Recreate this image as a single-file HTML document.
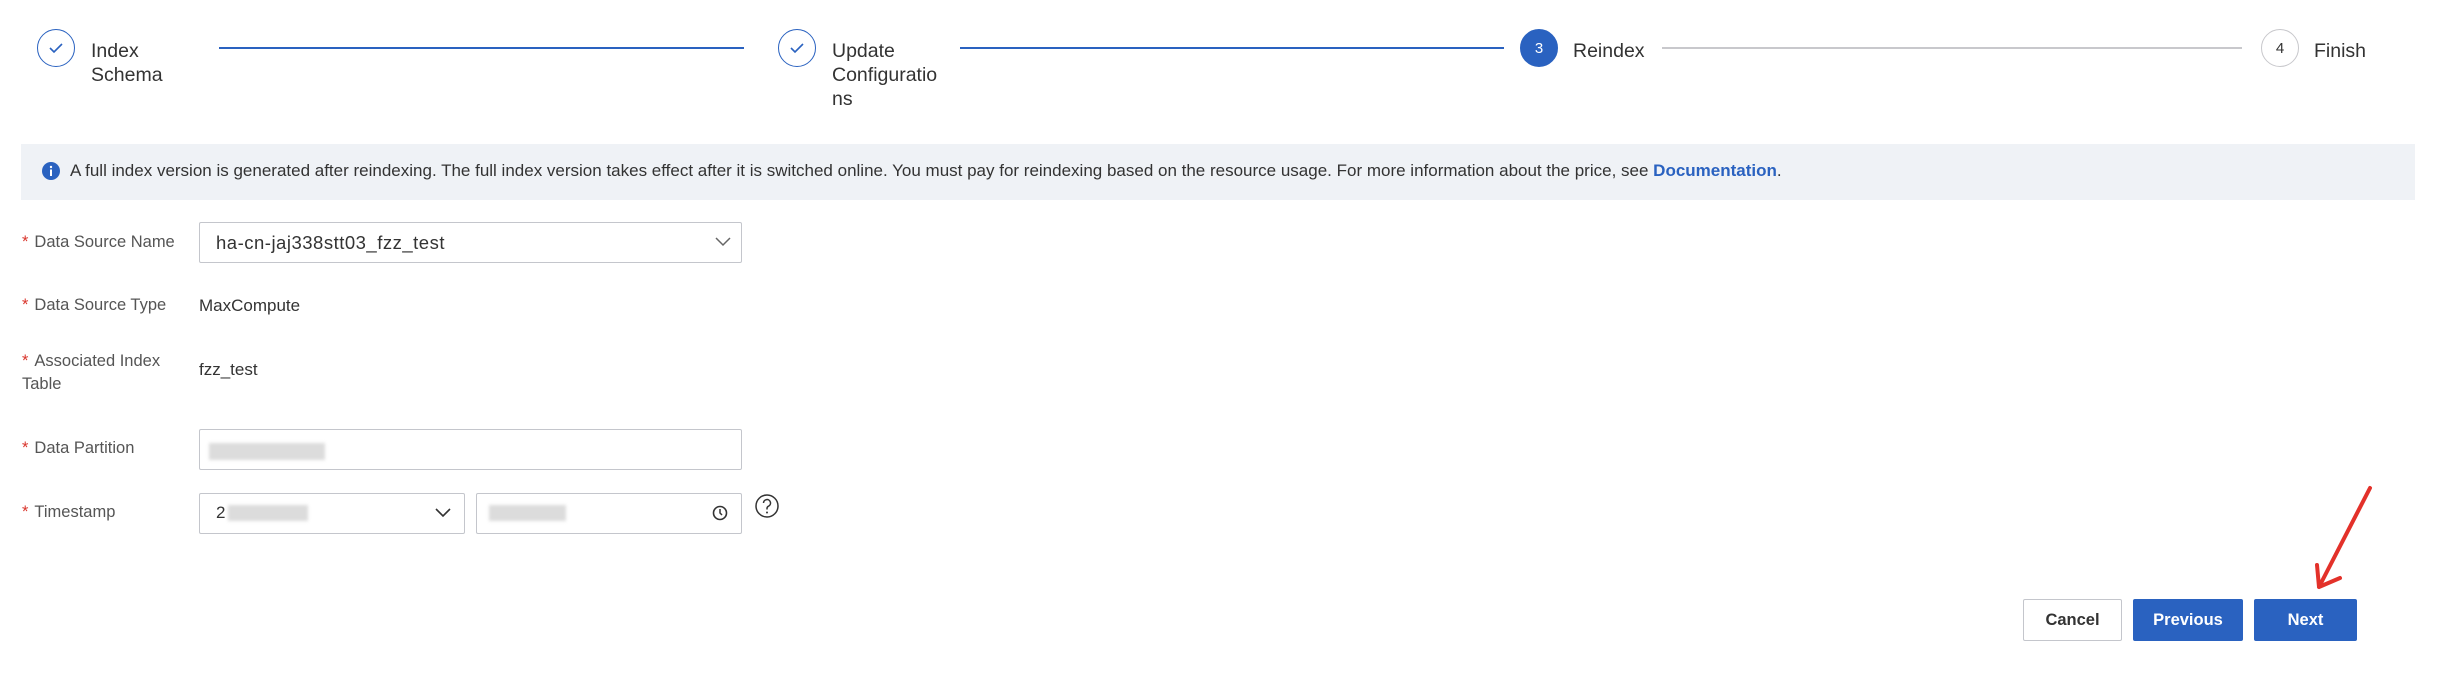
<!DOCTYPE html>
<html><head><meta charset="utf-8"><style>
*{box-sizing:border-box;margin:0;padding:0}
body{width:2440px;height:694px;background:#fff;font-family:"Liberation Sans",sans-serif;color:#333;position:relative;overflow:hidden}
.a{position:absolute}
.circ{position:absolute;width:38px;height:38px;border-radius:50%;border:1.5px solid #2a62c0;display:flex;align-items:center;justify-content:center;font-size:15px}
.st{position:absolute;font-size:19.5px;line-height:24px;color:#333}
.ln{position:absolute;height:1.5px;top:47px}
.lab{position:absolute;left:22px;font-size:16.5px;color:#555;line-height:23px}
.lab b{color:#d9342b;font-weight:normal;margin-right:6px}
.box{position:absolute;border:1px solid #c4c6cc;border-radius:2px;background:#fff}
.val{position:absolute;font-size:17px;color:#333}
.blur{position:absolute;background:#dcdcdc;filter:blur(1.5px)}
.btn{position:absolute;top:599px;height:42px;border-radius:2px;font-size:16.5px;font-weight:bold;display:flex;align-items:center;justify-content:center}
</style></head><body>
<div class="circ" style="left:37px;top:29px"><svg width="16" height="12" viewBox="0 0 16 12"><path d="M2 6l4 4 8-8" fill="none" stroke="#2a62c0" stroke-width="1.6"/></svg></div>
<div class="st" style="left:91px;top:39px">Index<br>Schema</div>
<div class="ln" style="left:219px;width:525px;background:#2a62c0"></div>
<div class="circ" style="left:778px;top:29px"><svg width="16" height="12" viewBox="0 0 16 12"><path d="M2 6l4 4 8-8" fill="none" stroke="#2a62c0" stroke-width="1.6"/></svg></div>
<div class="st" style="left:832px;top:39px">Update<br>Configuratio<br>ns</div>
<div class="ln" style="left:960px;width:544px;background:#2a62c0"></div>
<div class="circ" style="left:1520px;top:29px;background:#2a62c0;color:#fff">3</div>
<div class="st" style="left:1573px;top:39px">Reindex</div>
<div class="ln" style="left:1662px;width:580px;background:#c8c8cc"></div>
<div class="circ" style="left:2261px;top:29px;border-color:#c8c8cc;color:#333">4</div>
<div class="st" style="left:2314px;top:39px">Finish</div>

<div class="a" style="left:21px;top:144px;width:2394px;height:56px;background:#eff2f6"></div>
<svg class="a" style="left:42px;top:162px" width="18" height="18" viewBox="0 0 18 18"><circle cx="9" cy="9" r="9" fill="#2a62c0"/><rect x="8" y="7.5" width="2" height="6.5" fill="#fff"/><circle cx="9" cy="5" r="1.2" fill="#fff"/></svg>
<div class="a" style="left:70px;top:161px;font-size:17px;line-height:20px;color:#333;white-space:nowrap">A full index version is generated after reindexing. The full index version takes effect after it is switched online. You must pay for reindexing based on the resource usage. For more information about the price, see <span style="color:#2a62c0;font-weight:bold">Documentation</span>.</div>

<div class="lab" style="top:231px"><b>*</b>Data Source Name</div>
<div class="box" style="left:199px;top:222px;width:543px;height:41px"></div>
<div class="val" style="left:216px;top:232px;font-size:18.5px;letter-spacing:0.5px">ha-cn-jaj338stt03_fzz_test</div>
<svg class="a" style="left:714px;top:236px" width="18" height="12" viewBox="0 0 18 12"><path d="M2 2l7 7 7-7" fill="none" stroke="#666" stroke-width="1.5"/></svg>

<div class="lab" style="top:294px"><b>*</b>Data Source Type</div>
<div class="val" style="left:199px;top:296px">MaxCompute</div>

<div class="lab" style="top:350px"><b>*</b>Associated Index<br>Table</div>
<div class="val" style="left:199px;top:360px">fzz_test</div>

<div class="lab" style="top:437px"><b>*</b>Data Partition</div>
<div class="box" style="left:199px;top:429px;width:543px;height:41px"></div>
<div class="blur" style="left:209px;top:443px;width:116px;height:17px"></div>

<div class="lab" style="top:501px"><b>*</b>Timestamp</div>
<div class="box" style="left:199px;top:493px;width:266px;height:41px"></div>
<div class="val" style="left:216px;top:503px">2</div>
<div class="blur" style="left:228px;top:505px;width:80px;height:16px"></div>
<svg class="a" style="left:434px;top:507px" width="18" height="12" viewBox="0 0 18 12"><path d="M2 2l7 7 7-7" fill="none" stroke="#333" stroke-width="1.6"/></svg>
<div class="box" style="left:476px;top:493px;width:266px;height:41px"></div>
<div class="blur" style="left:489px;top:505px;width:77px;height:16px"></div>
<svg class="a" style="left:711px;top:504px" width="18" height="18" viewBox="0 0 18 18"><circle cx="9" cy="9" r="6.5" fill="none" stroke="#333" stroke-width="1.6"/><path d="M9 5v4l2 2" fill="none" stroke="#333" stroke-width="1.5"/></svg>
<svg class="a" style="left:754px;top:493px" width="26" height="26" viewBox="0 0 26 26"><circle cx="13" cy="13" r="11" fill="none" stroke="#333" stroke-width="1.5"/><path d="M9.5 10a3.5 3.5 0 1 1 5 3.2c-1 .5-1.5 1.2-1.5 2.3v1" fill="none" stroke="#333" stroke-width="1.5"/><circle cx="13" cy="19.5" r="1" fill="#333"/></svg>

<div class="btn" style="left:2023px;width:99px;border:1px solid #c4c6cc;color:#333">Cancel</div>
<div class="btn" style="left:2133px;width:110px;background:#2a62c0;color:#fff">Previous</div>
<div class="btn" style="left:2254px;width:103px;background:#2a62c0;color:#fff">Next</div>
<svg class="a" style="left:2300px;top:475px" width="90" height="125" viewBox="2300 475 90 125"><path d="M2370 488L2319 587M2317 565L2319 587L2340 578" fill="none" stroke="#e3312a" stroke-width="4" stroke-linecap="round" stroke-linejoin="round"/></svg>
</body></html>
